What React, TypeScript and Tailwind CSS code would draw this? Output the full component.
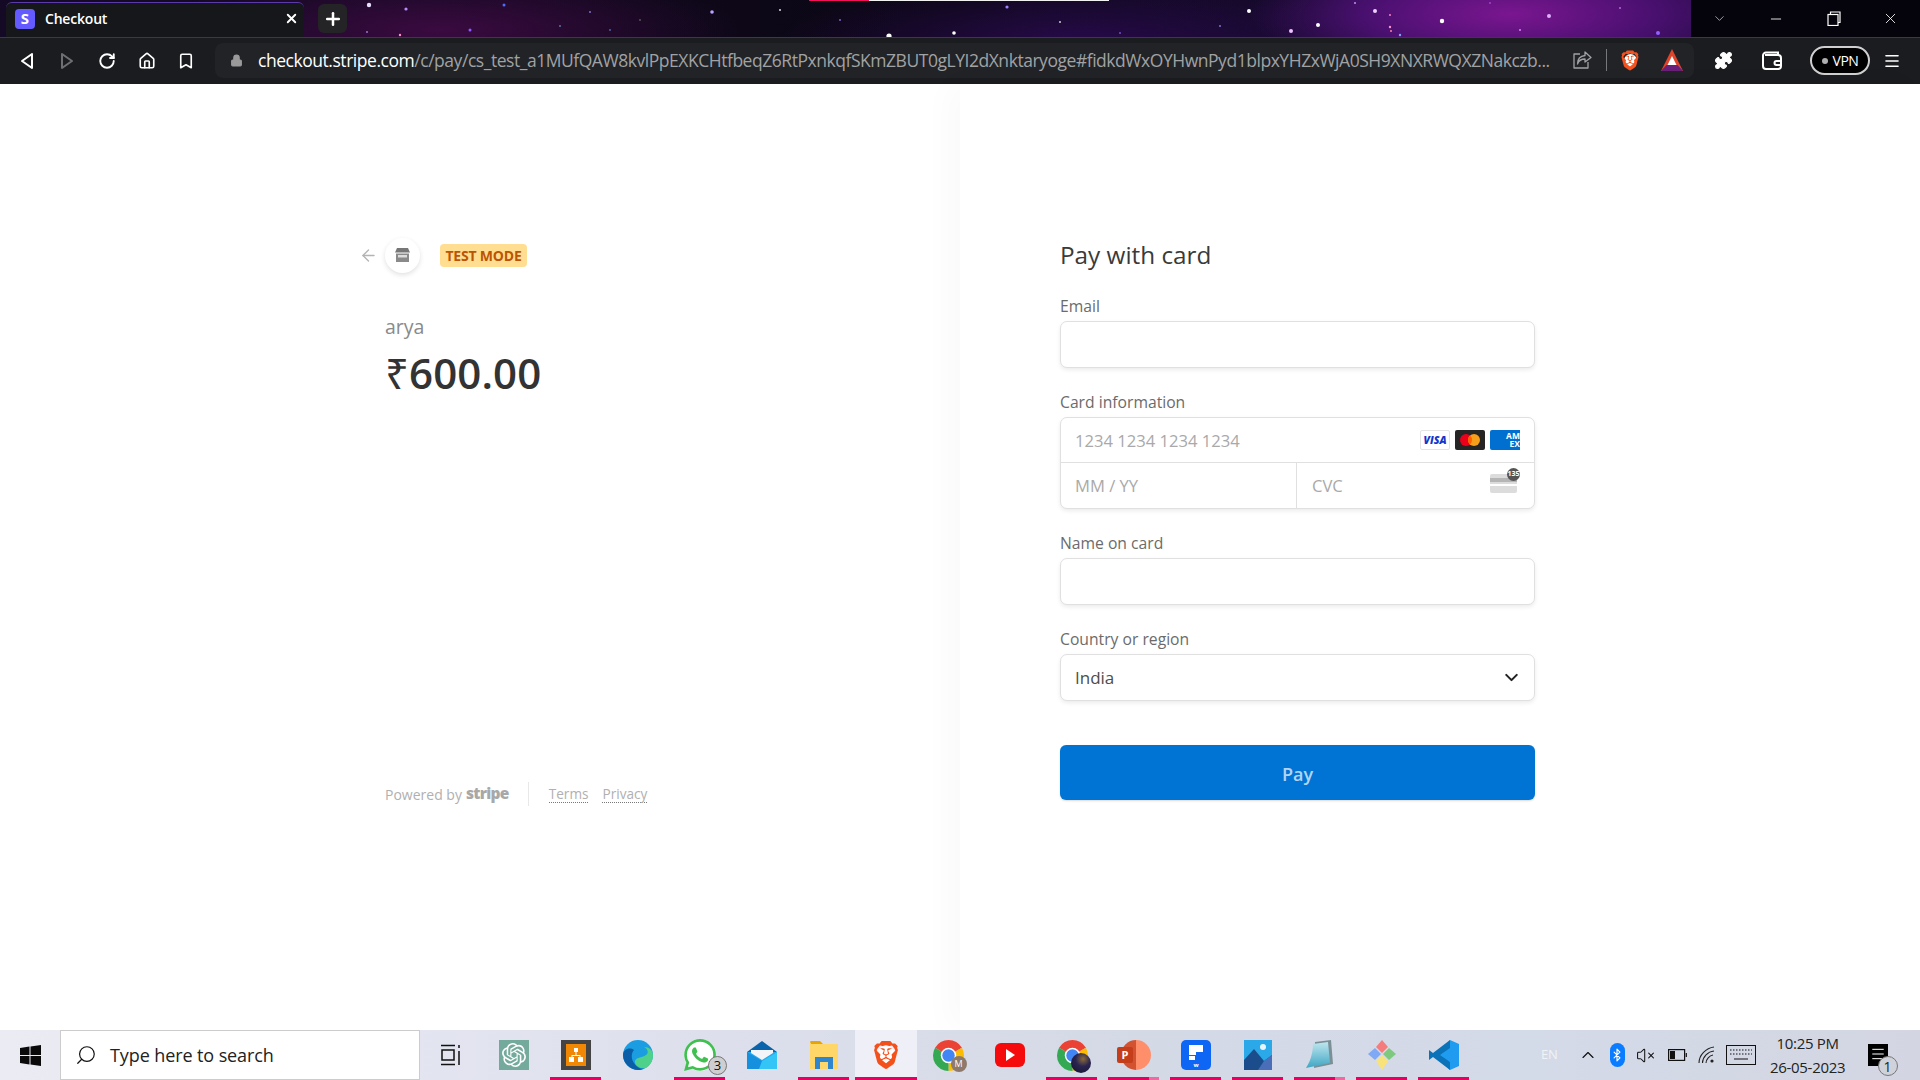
import React from "react";
import { ArrowLeft, ChevronDown, ChevronUp, Lock, Minus, X, Plus, RotateCw, Home, Bookmark, Puzzle, Menu, Search, Bluetooth, VolumeX } from "lucide-react";
import { SiBrave, SiOpenai, SiWhatsapp } from "react-icons/si";

const stars: [number, number, number, string][] = [
  [369, 5, 2.2, "#e8e0ff"], [406, 9, 1.6, "#b48cff"], [504, 5, 1.5, "#4a6cff"], [367, 32, 1, "#a070d0"], [400, 35, 1.2, "#ff90c0"],
  [470, 30, 1.5, "#8a5cff"], [590, 12, 1, "#8070c0"], [560, 26, 1, "#6070a0"], [610, 30, 1, "#5060a0"],
  [712, 12, 1.8, "#c0a0ff"], [780, 10, 1, "#ddd"], [889, 36, 2.6, "#fff"], [954, 33, 1.8, "#fff"], [1007, 7, 1.6, "#a080ff"], [1060, 22, 1, "#ccc"],
  [1120, 33, 1, "#7050c0"], [1249, 11, 2, "#fff"], [1220, 26, 1, "#8070d0"], [1355, 3, 1, "#c090ff"], [1375, 11, 2, "#f0d0ff"], [1390, 15, 1, "#ff80c0"],
  [1318, 25, 2, "#fff"], [1390, 27, 1.2, "#ff90d0"], [1442, 21, 2.2, "#fff"], [1490, 3, 1, "#a040d0"], [1549, 16, 2, "#e0b0ff"], [1391, 31, 1, "#ff80a0"], [1291, 31, 2, "#f0c0ff"],
  [1658, 33, 2, "#9060ff"], [1400, 35, 1.2, "#80a0ff"], [1520, 30, 1, "#e080ff"], [1770, 12, 1, "#556"], [1860, 35, 1.5, "#889"], [1620, 8, 1, "#c060e0"], [640, 20, 1, "#555"], [840, 20, 1, "#8060c0"],
];

const chrome = (
  <>
    <path d="M12 12 3.34 7A10 10 0 0 1 20.66 7Z" fill="#ea4335" />
    <path d="M12 12 20.66 7A10 10 0 0 1 12 22Z" fill="#fbbc04" />
    <path d="M12 12 12 22A10 10 0 0 1 3.34 7Z" fill="#34a853" />
    <circle cx="12" cy="12" r="5" fill="#fff" />
    <circle cx="12" cy="12" r="4" fill="#4285f4" />
  </>
);

function TaskIcon({ children, mark, light, active }: { children: React.ReactNode; mark?: boolean; light?: boolean; active?: boolean }) {
  return (
    <div className={`relative flex h-full w-[62px] shrink-0 items-center justify-center ${active ? "bg-[#eeeff7]" : ""}`}>
      {children}
      {mark && (
        <div className={`absolute bottom-0 flex h-[3px] bg-[#e6005f] ${active ? "inset-x-0" : "left-[5px] w-[51px]"}`}>
          {light && <div className="ml-auto h-full w-[10px] bg-[#ee6aa3]" />}
        </div>
      )}
    </div>
  );
}

function Field({ label, children, className }: { label: string; children?: React.ReactNode; className?: string }) {
  return (
    <div className={className}>
      <div className="mb-[5px] text-[15.7px] leading-[20px] font-medium text-[#6b6b6b]">{label}</div>
      {children}
    </div>
  );
}

const boxCls = "h-[47px] w-full rounded-[7px] border border-[#e0e0e0] bg-white shadow-[0_2px_4px_rgba(0,0,0,0.08)]";

export default function App() {
  return (
    <div className="flex h-[1080px] w-[1920px] flex-col overflow-hidden bg-white font-['Open_Sans',sans-serif]">
      {/* browser chrome */}
      <header className="h-[84px] shrink-0 bg-[#1b1c1f]">
        <div className="relative flex h-[37px] bg-[radial-gradient(ellipse_260px_70px_at_1510px_14px,#7a1690_0%,#4a1070_55%,transparent_100%),radial-gradient(ellipse_300px_60px_at_440px_30px,#3a0a40_0%,transparent_100%),radial-gradient(ellipse_300px_60px_at_1080px_40px,#260a48_0%,transparent_100%),linear-gradient(90deg,#140a26_0%,#0b0714_50%,#170a30_72%,#2a0c50_100%)]">
          <svg className="absolute inset-0" width="1920" height="37">
            {stars.map(([x, y, r, c], i) => <circle key={i} cx={x} cy={y} r={r} fill={c} />)}
          </svg>
          <div className="absolute top-0 left-[809px] h-[1px] w-[60px] bg-[#f0105c]" />
          <div className="absolute top-0 left-[869px] h-[1px] w-[240px] bg-[#f2f2f2]" />
          <div className="relative mt-[2px] ml-[6px] flex h-[35px] w-[298px] items-center rounded-t-[6px] border-t border-[#5a3aa8] bg-[#15171a] pr-[5px] pb-[3px] pl-[9px]">
            <div className="flex h-[20px] w-[20px] items-center justify-center rounded-[4px] bg-[#635bff] text-[15px] leading-none font-bold text-white">S</div>
            <span className="ml-[10px] text-[14px] font-semibold tracking-[-0.2px] text-white">Checkout</span>
            <X className="ml-auto text-white" size={15} strokeWidth={3} />
          </div>
          <div className="relative mt-[4px] ml-[14px] flex h-[29px] w-[29px] items-center justify-center rounded-[6px] bg-[#242426]">
            <Plus className="text-white" size={20} strokeWidth={3} />
          </div>
          <div className="relative ml-auto flex h-full w-[229px] items-center bg-[#05030c] text-white">
            <ChevronDown className="ml-[21px] text-[#cfcfcf]" size={15} strokeWidth={1.2} />
            <Minus className="ml-[41px]" size={16} strokeWidth={1.3} />
            <svg className="ml-[43px]" width="14" height="15" viewBox="0 0 14 15" fill="none" stroke="white" strokeWidth="1.2"><rect x="1" y="3.5" width="10" height="11" /><path d="M3.5 3.5V1H13V11.5H11" /></svg>
            <X className="ml-[41px]" size={17} strokeWidth={1.2} />
          </div>
        </div>
        <div className="flex h-[47px] items-start border-t border-[#3a3b3e] pt-[5px]">
          <div className="flex h-[35px] w-[215px] shrink-0 items-center text-white">
            <svg className="ml-[20px]" width="14" height="18" viewBox="0 0 14 18" fill="none" stroke="white" strokeWidth="2" strokeLinejoin="round"><path d="M12 2 2 9l10 7Z" /></svg>
            <svg className="ml-[26px]" width="14" height="18" viewBox="0 0 14 18" fill="none" stroke="#6e6f72" strokeWidth="2" strokeLinejoin="round"><path d="M2 2l10 7-10 7Z" /></svg>
            <RotateCw className="ml-[24px]" size={18} strokeWidth={2.5} />
            <Home className="ml-[22px]" size={18} strokeWidth={2.2} />
            <Bookmark className="ml-[21px]" size={18} strokeWidth={2.2} />
          </div>
          <div className="flex h-[35px] w-[1479px] shrink-0 items-center rounded-[8px] bg-[#212327] pr-[10px] pb-[1px]">
            <Lock className="ml-[15px] fill-[#9a9a9a] text-[#9a9a9a]" size={13} strokeWidth={2} />
            <div className="ml-[15px] w-[1297px] shrink-0 text-[17.5px] leading-[22px] tracking-[-0.46px] whitespace-nowrap text-[#a0a2a4]">
              <span className="text-white">checkout.stripe.com</span>/c/pay/cs_test_a1MUfQAW8kvlPpEXKCHtfbeqZ6RtPxnkqfSKmZBUT0gLYI2dXnktaryoge#fidkdWxOYHwnPyd1blpxYHZxWjA0SH9XNXRWQXZNakczb...
            </div>
            <svg className="ml-[18px]" width="19" height="18" viewBox="0 0 19 18" fill="none" stroke="#a0a2a4" strokeWidth="1.3" strokeLinejoin="round"><path d="M7 3H1V17H15V11" /><path d="M12 1 18 6.5 12 11V8C8 8 5.5 10 4.5 13 4.5 8 7.5 5 12 4.5Z" /></svg>
            <div className="ml-[14px] h-[22px] w-[1px] bg-[#77787a]" />
            <div className="relative ml-[13px] flex h-[24px] w-[20px] items-center justify-center">
              <div className="absolute h-[13px] w-[13px] rounded-full bg-white" />
              <SiBrave className="relative text-[#f4521f]" size={23} />
            </div>
            <svg className="ml-[20px]" width="24" height="24" viewBox="0 0 24 24"><path d="M12 1 23 23H1Z" fill="#e0452c" /><path d="M1 23 6.5 17H17.5L23 23Z" fill="#6a1f78" /><path d="M12 8 16.5 17H7.5Z" fill="#fff" /></svg>
          </div>
          <div className="flex h-[35px] flex-1 items-center text-white">
            <Puzzle className="ml-[20px] fill-white" size={19} strokeWidth={1.5} />
            <svg className="ml-[29px]" width="20" height="19" viewBox="0 0 20 19" fill="none" stroke="white" strokeWidth="2"><path d="M16 4V1.5H4A3 3 0 0 0 1 4.5V15A3 3 0 0 0 4 18H16A3 3 0 0 0 19 15V7A3 3 0 0 0 16 4H3" /><path d="M19 10H14.5A2 2 0 0 0 14.5 14H19" /></svg>
            <div className="ml-[28px] flex h-[29px] w-[60px] items-center justify-center gap-[5px] rounded-full border-2 border-[#cfcfcf] bg-black text-[14px] tracking-[-0.5px]">
              <span className="h-[6px] w-[6px] rounded-full bg-[#aeaeae]" />VPN
            </div>
            <Menu className="ml-[13px]" size={18} strokeWidth={2.2} />
          </div>
        </div>
      </header>

      {/* page */}
      <main className="flex flex-1">
        <section className="w-[960px] shrink-0 pt-[153px] pl-[359px]">
          <div className="flex h-[36px] items-center">
            <ArrowLeft className="text-[#b4b4b4]" size={19} strokeWidth={1.7} />
            <div className="ml-[7px] flex h-[35px] w-[35px] items-center justify-center rounded-full bg-white shadow-[0_2px_5px_rgba(0,0,0,0.12)]">
              <svg width="15" height="14" viewBox="0 0 15 14"><path d="M2 0H13L15 4.5H0Z" fill="#777" /><path d="M1 5.5H14V14H1Z" fill="#8a8a8a" /><path d="M3 7H12V9.5H3Z" fill="#ddd" /></svg>
            </div>
            <div className="ml-[20px] flex h-[23px] w-[87px] items-center justify-center rounded-[4px] bg-[#ffde92] text-[14px] font-bold tracking-[-0.2px] whitespace-nowrap text-[#bb5504]">TEST MODE</div>
          </div>
          <div className="mt-[41px] pl-[26px]">
            <div className="text-[19.5px] leading-[26px] font-medium text-[#8a8a8a]">arya</div>
            <div className="mt-[5px] text-[42px] leading-[56px] font-[560] tracking-[0.1px] text-[#333333]">₹600.00</div>
          </div>
          <div className="mt-[381px] ml-[26px] flex h-[24px] items-center text-[#b0b0b0]">
            <span className="text-[14px]">Powered by</span>
            <span className="ml-[4px] text-[15.5px] leading-none font-extrabold tracking-[-0.7px] text-[#a8a8a8]">stripe</span>
            <div className="ml-[19px] h-[24px] w-[1px] bg-[#e8e8e8]" />
            <span className="ml-[20px] border-b border-dotted border-[#777] text-[13.6px] leading-[16px]">Terms</span>
            <span className="ml-[14px] border-b border-dotted border-[#777] text-[13.6px] leading-[16px]">Privacy</span>
          </div>
        </section>
        <section className="flex-1 pt-[154px] pl-[100px] shadow-[-12px_0_30px_rgba(0,0,0,0.025)]">
          <div className="w-[475px]">
            <h1 className="text-[24.3px] leading-[34px] font-medium text-[#3a3a3a]">Pay with card</h1>
            <Field label="Email" className="mt-[24px]"><div className={boxCls} /></Field>
            <Field label="Card information" className="mt-[24px]">
              <div className="h-[92px] w-full overflow-hidden rounded-[7px] border border-[#e0e0e0] bg-white shadow-[0_2px_4px_rgba(0,0,0,0.08)]">
                <div className="flex h-[45px] items-center border-b border-[#e0e0e0] pr-[14px] pl-[14px]">
                  <span className="mt-[2px] text-[16.6px] text-[#a9a9a9]">1234 1234 1234 1234</span>
                  <div className="ml-auto flex gap-[5px]">
                    <div className="flex h-[20px] w-[30px] items-center justify-center rounded-[2px] border border-[#e4e4e4] bg-white text-[10.5px] leading-none font-extrabold text-[#1434cb] italic">VISA</div>
                    <div className="flex h-[20px] w-[30px] items-center justify-center rounded-[2px] bg-[#252525]">
                      <svg width="22" height="14" viewBox="0 0 22 14"><circle cx="7" cy="7" r="6" fill="#eb001b" /><circle cx="15" cy="7" r="6" fill="#f79e1b" /><path d="M11 2.5a6 6 0 0 1 0 9 6 6 0 0 1 0-9Z" fill="#ff5f00" /></svg>
                    </div>
                    <div className="flex h-[20px] w-[30px] flex-col items-end justify-center overflow-hidden rounded-l-[2px] bg-[#016fd0] text-[8.5px] leading-[8px] font-bold text-white">
                      <span>AM</span><span>EX</span>
                    </div>
                  </div>
                </div>
                <div className="flex h-[45px]">
                  <div className="flex w-[236px] items-center border-r border-[#e0e0e0] pt-[2px] pl-[14px] text-[16.6px] text-[#a9a9a9]">MM / YY</div>
                  <div className="relative flex flex-1 items-center pt-[2px] pl-[15px] text-[16.6px] text-[#a9a9a9]">
                    CVC
                    <div className="absolute top-[11px] right-[17px] h-[19px] w-[27px] rounded-[2px] bg-[#dcdcdc]"><div className="mt-[4px] h-[4px] w-full bg-[#b5b5b5]" /><div className="mt-[2px] h-[2px] w-full bg-white" /></div>
                    <div className="absolute top-[5px] right-[14px] flex h-[13px] w-[13px] items-center justify-center rounded-full bg-[#555] text-[7px] font-bold text-white">135</div>
                  </div>
                </div>
              </div>
            </Field>
            <Field label="Name on card" className="mt-[24px]"><div className={boxCls} /></Field>
            <Field label="Country or region" className="mt-[24px]">
              <div className={`${boxCls} flex items-center pr-[12px] pl-[14px] text-[17px] text-[#4d4d4d]`}>
                India
                <ChevronDown className="ml-auto text-[#222]" size={21} strokeWidth={2.4} />
              </div>
            </Field>
            <div className="mt-[44px] flex h-[55px] items-center justify-center rounded-[6px] bg-[#0074d4] pt-[3px] text-[18px] font-semibold text-[#b3d4f2] shadow-[0_1px_2px_rgba(0,0,0,0.15)]">Pay</div>
          </div>
        </section>
      </main>

      {/* taskbar */}
      <footer className="relative flex h-[50px] shrink-0 items-center bg-[linear-gradient(90deg,#ebebf3_0%,#e0e2ee_30%,#d4d9e6_60%,#d3dae8_80%,#d3d6e2_100%)]">
        <div className="flex h-full w-[60px] shrink-0 items-center justify-center">
          <svg width="21" height="21" viewBox="0 0 21 21" fill="#0a0a0a"><path d="M0 3 9.5 1.6V10H0ZM10.5 1.5 21 0V10H10.5ZM0 11H9.5V19.4L0 18ZM10.5 11H21V21L10.5 19.5Z" /></svg>
        </div>
        <div className="flex h-full w-[360px] shrink-0 items-center border border-[#cccccc] bg-white pl-[14px]">
          <Search className="-scale-x-100 text-[#111]" size={22} strokeWidth={1.3} />
          <span className="ml-[13px] text-[18px] tracking-[-0.1px] text-[#222]">Type here to search</span>
        </div>
        <div className="flex h-full w-[63px] shrink-0 items-center justify-center">
          <svg className="-ml-[2px]" width="20" height="22" viewBox="0 0 20 22" fill="none" stroke="#111" strokeWidth="1.5"><path d="M0 1.5H14M0 20.5H14M1 6H13V16H1ZM18 1V4M18 7V21" /></svg>
        </div>
        <TaskIcon><div className="flex h-[30px] w-[30px] items-center justify-center bg-[#74aa9c]"><SiOpenai className="text-white" size={24} /></div></TaskIcon>
        <TaskIcon mark><div className="flex h-[30px] w-[30px] items-center justify-center bg-[#444444]"><div className="flex h-[22px] w-[20px] items-center justify-center bg-[#f08705]"><svg width="16" height="16" viewBox="0 0 16 16" fill="#fff"><rect x="6" y="1" width="4" height="4" /><rect x="1" y="10" width="5" height="5" /><rect x="10" y="10" width="5" height="5" /><path d="M7.5 5h1v3h4v2h-1V9h-7v1h-1V8h4Z" /></svg></div></div></TaskIcon>
        <TaskIcon>
          <svg width="32" height="32" viewBox="0 0 32 32"><circle cx="16" cy="16" r="15" fill="#1b9de2" /><path d="M31 16C31 11 27 8 22 8 26 10 27 14 24 16 20 19 12 18 13 24 14 28 20 30 24 29 28 27 31 22 31 16Z" fill="#4ed18a" /><path d="M1 16C1 10 8 8 12 11 9 14 9 20 12 24 15 29 20 31 23 29 20 31 18 31 16 31 8 31 1 24 1 16Z" fill="#0a5ea8" /></svg>
        </TaskIcon>
        <TaskIcon mark>
          <div className="relative h-[32px] w-[32px]">
            <div className="absolute inset-0 rounded-full bg-white" />
            <SiWhatsapp className="relative text-[#3fc04f]" size={32} />
            <div className="absolute -right-[11px] -bottom-[4px] flex h-[19px] w-[19px] items-center justify-center rounded-full border border-[#777] bg-[#cfcfd2] text-[13px] text-[#111]">3</div>
          </div>
        </TaskIcon>
        <TaskIcon>
          <svg width="30" height="28" viewBox="0 0 30 28"><path d="M0 11 15 0 30 11V14H0Z" fill="#0a63ab" /><rect y="11" width="30" height="17" fill="#28a8ea" /><path d="M0 11 15 20 30 11V28H0Z" fill="#1490df" /><path d="M15 20 30 11V28H12Z" fill="#32c5f5" /><path d="M4 9H26V12L15 19 4 12Z" fill="#f2f4f8" /></svg>
        </TaskIcon>
        <TaskIcon mark>
          <svg width="28" height="28" viewBox="0 0 28 28"><path d="M0 1C0 0 1 0 2 0H10L13 3H1Z" fill="#e5a505" /><rect y="3" width="28" height="25" fill="#ffd768" /><rect x="5" y="16" width="18" height="12" fill="#2f86cf" /><rect x="10" y="21" width="8" height="7" fill="#ffd768" /></svg>
        </TaskIcon>
        <TaskIcon mark active>
          <div className="relative flex h-[32px] w-[28px] items-center justify-center"><div className="absolute h-[18px] w-[18px] rounded-full bg-white" /><SiBrave className="relative text-[#f4501c]" size={32} /></div>
        </TaskIcon>
        <TaskIcon>
          <div className="relative"><svg width="31" height="31" viewBox="2 2 20 20">{chrome}</svg>
            <div className="absolute -right-[3px] -bottom-[1px] flex h-[16px] w-[16px] items-center justify-center rounded-full bg-[#8d7a6c] text-[9px] text-white">M</div></div>
        </TaskIcon>
        <TaskIcon><div className="flex h-[24px] w-[30px] items-center justify-center rounded-[6px] bg-[#f50b0b]"><svg width="10" height="12" viewBox="0 0 10 12" fill="#fff"><path d="M1 0 10 6 1 12Z" /></svg></div></TaskIcon>
        <TaskIcon mark>
          <div className="relative"><svg width="31" height="31" viewBox="2 2 20 20">{chrome}</svg>
            <div className="absolute -right-[3px] -bottom-[2px] h-[20px] w-[20px] rounded-full bg-[radial-gradient(circle_at_60%_30%,#8a6a3a_0%,#2a2550_40%,#12122e_100%)]" /></div>
        </TaskIcon>
        <TaskIcon mark light>
          <div className="relative h-[30px] w-[34px]">
            <div className="absolute right-0 h-[30px] w-[30px] rounded-full bg-[linear-gradient(90deg,#d35230_50%,#ff8f6b_50%)]" />
            <div className="absolute top-[7px] left-0 flex h-[16px] w-[16px] items-center justify-center rounded-[2px] bg-[#c43e1c] text-[11px] font-bold text-white">P</div>
          </div>
        </TaskIcon>
        <TaskIcon mark>
          <div className="flex h-[30px] w-[30px] flex-col items-center rounded-[5px] bg-[#0d66f4] pt-[5px]">
            <svg width="14" height="15" viewBox="0 0 14 15" fill="#fff"><path d="M0 0H14V7H7V10H0Z" /><rect x="0" y="11" width="6" height="4" /></svg>
            <div className="mt-[2px] text-[6px] leading-[6px] font-bold text-white">w</div>
          </div>
        </TaskIcon>
        <TaskIcon mark>
          <svg width="28" height="30" viewBox="0 0 28 30"><rect width="28" height="30" fill="#2aa8e8" /><circle cx="19" cy="7" r="3" fill="#e8f4fc" /><path d="M0 20 10 9 20 21 28 15V30H0Z" fill="#1b4d8c" /><path d="M14 30 20 21 28 15V30Z" fill="#4a6fb8" /></svg>
        </TaskIcon>
        <TaskIcon mark light>
          <svg width="28" height="30" viewBox="0 0 28 30"><path d="M9 2 25 0 27 24 8 28Z" fill="#7a8f96" /><path d="M7 4 22 2 24 23 0 28C4 22 7 13 7 4Z" fill="url(#np)" /><defs><linearGradient id="np" x1="0" y1="0" x2="0" y2="1"><stop offset="0" stopColor="#bfe6ee" /><stop offset="1" stopColor="#3fa6c4" /></linearGradient></defs></svg>
        </TaskIcon>
        <TaskIcon mark>
          <svg width="32" height="32" viewBox="0 0 32 32"><path d="M16 1 22 8 16 14 10 8Z" fill="#f47c7c" /><path d="M9 9 15 15 9 21 2 15Z" fill="#7fa9f5" /><path d="M23 9 30 15 23 21 17 15Z" fill="#7fc97f" /><path d="M16 16 22 22 16 31 10 22Z" fill="#f8e37a" /></svg>
        </TaskIcon>
        <TaskIcon mark>
          <svg width="30" height="30" viewBox="0 0 30 30"><path d="M21 0 30 4V26L21 30 8 17Z" fill="#1f9cf0" /><path d="M21 0 4 13 0 10V20L4 17 21 30V22L11 15 21 8Z" fill="#0a72b8" /></svg>
        </TaskIcon>
        <div className="flex h-full flex-1 items-center">
          <span className="ml-[66px] text-[13px] tracking-[-0.2px] text-[#f0f2f6]">EN</span>
          <ChevronUp className="ml-[20px] text-[#111]" size={20} strokeWidth={1.4} />
          <div className="ml-[12px] flex h-[24px] w-[15px] items-center justify-center rounded-full bg-[#0a7cff]"><Bluetooth className="text-white" size={14} strokeWidth={2} /></div>
          <VolumeX className="ml-[11px] text-[#111]" size={19} strokeWidth={1.3} />
          <svg className="ml-[13px]" width="19" height="12" viewBox="0 0 19 12" fill="none" stroke="#111" strokeWidth="1.2"><rect x=".6" y=".6" width="16" height="10.8" /><rect x="2" y="2" width="5" height="8" fill="#111" stroke="none" /><path d="M18.3 4V8" /></svg>
          <svg className="ml-[11px]" width="17" height="18" viewBox="0 0 17 18" fill="none" stroke="#222" strokeWidth="1.1"><path d="M1 17C1 9 8 2 16 1" /><path d="M4.5 17C4.5 11 10 5.5 16 5" /><path d="M8 17C8 13.5 11.5 9.5 15 9" /><circle cx="14" cy="15" r="1.6" fill="#222" stroke="none" /></svg>
          <svg className="ml-[11px]" width="30" height="20" viewBox="0 0 30 20" fill="none" stroke="#111"><rect x=".5" y=".5" width="29" height="19" /><path d="M4 5H26M4 9H26" strokeDasharray="1.5 1.5" /><path d="M8 14H22" /></svg>
          <div className="ml-[14px] flex w-[76px] flex-col items-center text-[15px] leading-[24px] tracking-[-0.3px] whitespace-nowrap text-[#222]">
            <span>10:25 PM</span><span>26-05-2023</span>
          </div>
          <div className="relative ml-[22px] h-[22px] w-[20px] bg-black">
            <Menu className="absolute top-[2px] left-[2px] text-white" size={16} strokeWidth={1.5} />
            <div className="absolute -right-[10px] -bottom-[10px] flex h-[20px] w-[20px] items-center justify-center rounded-full border border-[#777] bg-[#cfd2da] text-[14px] text-[#222]">1</div>
          </div>
        </div>
      </footer>
    </div>
  );
}
